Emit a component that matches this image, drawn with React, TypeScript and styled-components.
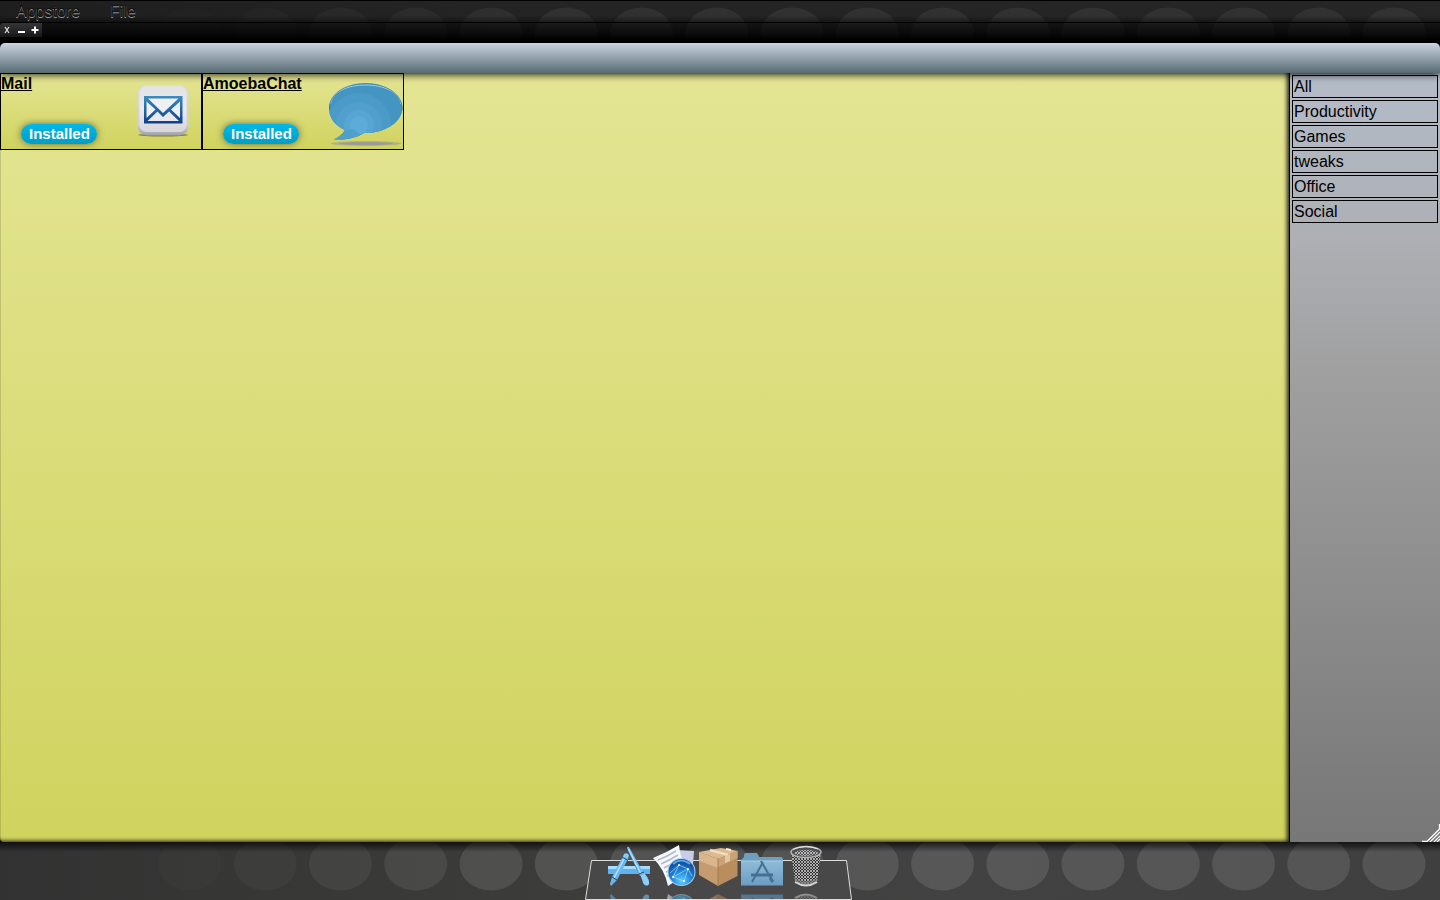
import React from 'react';
import styled, { createGlobalStyle } from 'styled-components';

const GlobalStyle = createGlobalStyle`
  * { box-sizing: border-box; }
  body {
    margin: 0;
    background: #3c3c3c;
    color: #000;
    font-family: "Liberation Sans", Arial, sans-serif;
    font-size: 16px;
    line-height: 18px;
  }
  button { font: inherit; color: inherit; padding: 0; border: 0; background: none; }
  ul { list-style: none; margin: 0; padding: 0; }
`;

const Desktop = styled.div`
  display: flex;
  flex-direction: column;
  min-height: 100vh;
  overflow: hidden;
`;

const Wallpaper = styled.svg`
  position: absolute;
  inset: 0;
  width: 100%;
  height: 100%;
`;

const TopArea = styled.header`
  position: relative;
  height: 43px;
  background: linear-gradient(90deg, #333 0%, #3c3c3c 30%, #404040 100%);
`;

const TopShade = styled.div`
  position: relative;
  height: 43px;
  background: linear-gradient(
    rgba(0, 0, 0, 0.4) 0,
    rgba(0, 0, 0, 0.42) 16px,
    rgba(0, 0, 0, 0.62) 21px,
    rgba(0, 0, 0, 0.7) 24px,
    rgba(0, 0, 0, 0.84) 34px,
    #000 41px
  );
`;

const MenuBar = styled.nav`
  display: flex;
  gap: 30px;
  height: 23px;
  padding: 2px 16px 0;
  border-top: 1px solid #000;
  border-bottom: 1px solid #000;
`;

const MenuButton = styled.button`
  height: 18px;
  color: #111;
  text-shadow: 0 1px 0 #999;
`;

const WindowControls = styled.div`
  display: flex;
  width: 42px;
  height: 14px;
  background: linear-gradient(#353535, #1b1b1b);
  border-radius: 4px 0 0 0;
`;

const ControlButton = styled.button`
  display: flex;
  align-items: center;
  justify-content: center;
  width: 14px;
  height: 14px;
`;

const AppWindow = styled.main`
  position: relative;
  display: flex;
  flex-direction: column;
  flex: 1;
  background: #000;
  box-shadow: 0 0 10px #000;
`;

const TitleBar = styled.div`
  position: relative;
  z-index: 1;
  height: 30px;
  border-radius: 5px 5px 0 0;
  background: linear-gradient(#cbd4e0, #8c9ba6 55%, #586a72);
  box-shadow: 0 1px 8px #000;
`;

const WindowBody = styled.div`
  display: flex;
  flex: 1;
`;

const Store = styled.section`
  position: relative;
  display: flex;
  flex: 1;
  align-items: flex-start;
  background: linear-gradient(#e4e594, #d0d35e);
  border-radius: 0 0 0 4px;
  box-shadow: inset -3px -2px 4px -1px rgba(0, 0, 0, 0.85), inset 1px 0 0 rgba(0, 0, 0, 0.12);
`;

const AppCard = styled.article`
  position: relative;
  display: flex;
  justify-content: space-between;
  width: 202px;
  height: 77px;
  border: 1px solid #000;
  background: linear-gradient(#e4e594, #d0d35e);
`;

const CardText = styled.div`
  display: flex;
  flex-direction: column;
  align-items: flex-start;
  justify-content: space-between;
  padding: 1px 0 5px;
`;

const AppName = styled.h2`
  margin: 0;
  font-size: 16px;
  line-height: 18px;
  text-decoration: underline;
`;

const InstalledButton = styled.button`
  height: 20px;
  margin-left: 20px;
  padding: 0 7px 0 8px;
  border-radius: 10px;
  background: linear-gradient(#00b7ea, #009ec3);
  box-shadow: 0 0 7px rgba(60, 60, 40, 0.7);
  color: #fff;
  font-size: 15px;
  font-weight: bold;
  line-height: 20px;
`;

const CardArt = styled.svg`
  position: absolute;
  top: 0;
  right: 0;
  width: 75px;
  height: 75px;
`;

const Sidebar = styled.aside`
  position: relative;
  width: 151px;
  border-left: 1px solid #000;
  padding: 2px;
  background: linear-gradient(#b4bcc8 0, #adafb4 22%, #9f9f9f 40%, #777 100%);
`;

const CategoryList = styled.ul`
  display: flex;
  flex-direction: column;
  gap: 2px;
`;

const CategoryButton = styled.button`
  display: block;
  width: 100%;
  height: 23px;
  padding: 0 1px;
  border: 1px solid #000;
  text-align: left;
  line-height: 21px;
`;

const ResizeGrip = styled.svg`
  position: absolute;
  right: 0;
  bottom: 0;
  width: 18px;
  height: 18px;
`;

const BottomArea = styled.footer`
  position: relative;
  display: flex;
  justify-content: center;
  height: 58px;
  padding-right: 2px;
  background: linear-gradient(90deg, #323232 0%, #3a3a38 30%, #424242 65%, #3f3f3f 100%);
`;

const BottomShade = styled.div`
  position: absolute;
  inset: 0;
  background: linear-gradient(rgba(0, 0, 0, 0.7), transparent 10px);
`;

const Dock = styled.nav`
  position: relative;
  width: 268px;
  height: 58px;
`;

const Shelf = styled.svg`
  position: absolute;
  left: 0;
  bottom: 0;
  width: 268px;
  height: 40px;
`;

const DockList = styled.ul`
  position: relative;
  display: flex;
  justify-content: center;
  padding: 2px 2px 0 0;
`;

const DockButton = styled.button`
  display: flex;
  flex-direction: column;
  gap: 4px;
  width: 44px;
  height: 56px;
`;

const DockIcon = styled.svg`
  display: block;
  flex: none;
  width: 44px;
  height: 44px;
`;

const Reflection = styled.span`
  display: block;
  width: 44px;
  height: 7px;
  overflow: hidden;
  opacity: 0.5;
  svg { transform: scaleY(-1); }
`;

const DOTS = Array.from({ length: 17 }, (_, i) => 190 + i * 75.25);
const dotOpacity = (i: number) => [0.015, 0.03, 0.06, 0.08, 0.1][i] ?? 0.115;

function Dots({ y, height }: { y: number; height: number }) {
  return (
    <Wallpaper viewBox={`0 0 1440 ${height}`} preserveAspectRatio="xMidYMin slice" aria-hidden="true">
      <g fill="#fff">
        {DOTS.map((x, i) => (
          <ellipse key={x} cx={x} cy={y} rx="31.5" ry="26.5" fillOpacity={dotOpacity(i)} />
        ))}
      </g>
    </Wallpaper>
  );
}

function MailArt() {
  return (
    <CardArt viewBox="0 0 75 75" aria-hidden="true">
      <defs>
        <linearGradient id="tile" x2="0" y2="1">
          <stop stopColor="#dcdce0" /><stop offset=".8" stopColor="#cfcfd3" /><stop offset="1" stopColor="#a0a0a4" />
        </linearGradient>
        <linearGradient id="tileFace" x2="0" y2="1">
          <stop stopColor="#e2e2e2" /><stop offset=".5" stopColor="#ececf0" /><stop offset="1" stopColor="#d6d6da" />
        </linearGradient>
        <linearGradient id="ink" x2="0" y2="1">
          <stop stopColor="#3a8dc2" /><stop offset="1" stopColor="#0f3e8a" />
        </linearGradient>
      </defs>
      <ellipse cx="37" cy="61" rx="25" ry="1.5" fill="#55552a" opacity=".7" />
      <rect x="11.5" y="11" width="51" height="50.5" rx="9" fill="url(#tile)" />
      <rect x="13.5" y="12" width="47" height="46" rx="7" fill="url(#tileFace)" />
      <rect x="18" y="22" width="38.5" height="27.5" fill="url(#ink)" />
      <path d="M22 24.5H52.5L37 39Z" fill="#f0f0f2" />
      <path d="M20.500 27.500V44L29.500 35.500ZM54 27.500V44L45 35.500Z" fill="#f0f0f2" />
      <path d="M21.500 47L31.500 37.500L37 43L43 37.500L53 47Z" fill="#e9e9ed" />
    </CardArt>
  );
}

function ChatArt() {
  return (
    <CardArt viewBox="0 0 75 75" aria-hidden="true">
      <defs>
        <clipPath id="bubble">
          <path d="M37.500 9.500C58 9.500 74.500 20.500 74.500 34S58 59.500 36 59C28 64 18 66 6 65.500C11 63 15 60 17 56C7 51.500 1 44 1 34.500C1 20.500 17 9.500 37.500 9.500Z" />
        </clipPath>
      </defs>
      <ellipse cx="38" cy="69.5" rx="35" ry="2.5" fill="#92929c" opacity=".5" />
      <ellipse cx="38" cy="69.5" rx="27" ry="1.5" fill="#9292a4" opacity=".7" />
      <g clipPath="url(#bubble)">
        <rect width="75" height="75" fill="#4595c2" />
        <circle cx="31" cy="51" r="32" fill="#4b9bc8" />
        <circle cx="31" cy="51" r="23" fill="#509fcd" />
        <circle cx="31" cy="51" r="15" fill="#57a5d3" />
        <circle cx="31" cy="51" r="9" fill="#5cabd9" />
        <path d="M0 60L25 55L34 62L5 68Z" fill="#509fcd" />
      </g>
      <path d="M2.500 30C4 18 19 11 37.500 11S71 18 73 30" fill="none" stroke="#9bd4f5" strokeWidth="1" />
      <path d="M1.500 36C0 21 16 9.500 37.500 9.500S75 21 74 36" fill="none" stroke="#3178aa" strokeWidth=".7" />
    </CardArt>
  );
}

function AppStoreShape() {
  return (
    <>
      <path d="M0 22H42V30H0Z" fill="#5fb3ef" />
      <path d="M0 22H42V25H0Z" fill="#a6dcff" />
      <path d="M10 31L14 22M33 31L28 22" stroke="#3c4853" strokeWidth="2" />
      <path d="M19 4Q19 2 21 3L36 30L32 32Z" fill="#6bbcf4" />
      <path d="M20.500 5L33 30" stroke="#b8e3ff" strokeWidth="1.200" />
      <path d="M15 12L20 15L9 36L3 42L2 40L4 33Z" fill="#68b6ee" />
      <path d="M16.500 14L6 34" stroke="#b5e2ff" strokeWidth="1.500" />
      <path d="M16 10Q19 8 21 11L20 15L15 12.500Z" fill="#85ccff" />
      <path d="M14 13L20 16.500M4 33L9 36M31 30L36 28" stroke="#244965" strokeWidth="1" />
      <path d="M32.500 31.500L36.500 29.500Q43 37 40.500 41Q36 43 34.500 37Z" fill="#8bceff" />
    </>
  );
}

function DocumentsShape() {
  return (
    <>
      <path d="M25 6L42 7L40 34L23 31Z" fill="#c9cde8" />
      <path d="M1 14Q14 9 27 1L28 8L34 30L16 42Q13 26 1 14Z" fill="#f5f7fd" />
      <path d="M6 16Q16 12 24 7M9 20Q18 16 26 11M12 24L27 16M14 28L21 25M15 32L18 31" fill="none" stroke="#b3bac8" strokeWidth="1.500" />
      <circle cx="29.5" cy="28" r="14" fill="#a8cdee" />
      <circle cx="29.500" cy="28" r="13" fill="url(#globe)" />
      <path d="M18 29L27 21L36 25L32 37L21 33L27 21M21 33L36 25L40 32" fill="none" stroke="#a9e0ff" strokeWidth=".7" />
      <path d="M21 20Q29 13 38 20" fill="none" stroke="#5da5e9" strokeWidth="2" />
      <g fill="#fff"><circle cx="27" cy="21" r="1" /><circle cx="36" cy="25" r="1" /><circle cx="32" cy="37" r="1" /><circle cx="21" cy="33" r="1" /></g>
    </>
  );
}

function BoxShape() {
  return (
    <>
      <path d="M3 8L25 4L42 7L22 15Z" fill="#dcb98f" />
      <path d="M3 8L22 15V42L3 31Z" fill="#c59b6f" />
      <path d="M22 15L41.500 7V32L22 42Z" fill="#b98e5f" />
      <path d="M3 8L22 15V24L3 17Z" fill="#d9b68b" />
      <path d="M14 6L32 11" stroke="#efdcbf" strokeWidth="2.500" />
      <path d="M30 5L35 6" stroke="#fff3dc" strokeWidth="2" />
      <path d="M22 15L41.500 7V14L22 23Z" fill="#caa274" />
      <path d="M22 15V42" stroke="#a67c50" />
      <path d="M29 12.200L34 10V17L29 19Z" fill="#e2c8a2" />
    </>
  );
}

function FolderShape() {
  return (
    <>
      <path d="M1 16L4 13V11Q4 9 6 9H16Q18 9 19 13H41Q43 13 43 16V41H1Z" fill="#6f9fbe" />
      <rect x="1" y="17" width="42" height="25" fill="url(#folderFace)" />
      <path d="M1 17H43" stroke="#a9cee3" />
      <path d="M11 29.500H33V32.500H11Z" fill="#466f91" />
      <path d="M21 17L32 36M23 18L12 38" fill="none" stroke="#466f91" strokeWidth="2" />
      <path d="M30 34L33 38" stroke="#466f91" strokeWidth="3" />
      <path d="M1 41.500H43" stroke="#45799f" />
    </>
  );
}

function TrashShape() {
  return (
    <>
      <path d="M7 8L11 38Q22 46 33 38L37 8Z" fill="#303030" />
      <path d="M7 8L11 38Q22 46 33 38L37 8Z" fill="url(#mesh)" />
      <path d="M10 33Q22 41 34 33L33 39Q22 45 11 39Z" fill="#777" opacity=".6" />
      <ellipse cx="22" cy="8" rx="15" ry="5.5" fill="#505050" stroke="#b5b5b5" strokeWidth="1.500" />
      <ellipse cx="22" cy="9" rx="12" ry="3" fill="url(#mesh)" />
      <path d="M9 5.500Q21 0 34 5" fill="none" stroke="#eee" strokeWidth="1" />
      <path d="M11 38Q22 45 33 38" fill="none" stroke="#d5d5d5" strokeWidth="2" />
    </>
  );
}

const CATEGORIES = ['All', 'Productivity', 'Games', 'tweaks', 'Office', 'Social'];
const APPS = [
  { name: 'Mail', Art: MailArt },
  { name: 'AmoebaChat', Art: ChatArt },
];
const DOCK_ITEMS = [
  { label: 'Appstore', Shape: AppStoreShape },
  { label: 'Browser', Shape: DocumentsShape },
  { label: 'Packages', Shape: BoxShape },
  { label: 'Applications', Shape: FolderShape },
  { label: 'Trash', Shape: TrashShape },
];

export default function App() {
  return (
    <Desktop>
      <GlobalStyle />
      <TopArea>
        <Dots y={34} height={43} />
        <TopShade>
          <MenuBar aria-label="Menu">
            <MenuButton>Appstore</MenuButton>
            <MenuButton>File</MenuButton>
          </MenuBar>
          <WindowControls>
            <ControlButton aria-label="Close">
              <svg width="14" height="14"><path d="M5 4L9 10M9 4L5 10" stroke="#ddd" strokeWidth="1.300" /></svg>
            </ControlButton>
            <ControlButton aria-label="Minimize">
              <svg width="14" height="14"><path d="M4 9H11" stroke="#fff" strokeWidth="2" /></svg>
            </ControlButton>
            <ControlButton aria-label="Maximize">
              <svg width="14" height="14"><path d="M3.500 7H10.500M7 3.500V10.500" stroke="#fff" strokeWidth="2" /></svg>
            </ControlButton>
          </WindowControls>
        </TopShade>
      </TopArea>
      <AppWindow>
        <TitleBar />
        <WindowBody>
          <Store>
            {APPS.map(({ name, Art }) => (
              <AppCard key={name}>
                <CardText>
                  <AppName>{name}</AppName>
                  <InstalledButton>Installed</InstalledButton>
                </CardText>
                <Art />
              </AppCard>
            ))}
          </Store>
          <Sidebar>
            <CategoryList>
              {CATEGORIES.map((category) => (
                <li key={category}><CategoryButton>{category}</CategoryButton></li>
              ))}
            </CategoryList>
            <ResizeGrip viewBox="0 0 18 18" aria-hidden="true">
              <path d="M0 17.500H5L17.500 5V0" fill="none" stroke="#fff" strokeWidth="1.300" />
              <path d="M8 18L18 8M12 18L18 12M15 18L18 15" stroke="#fff" strokeWidth="1.200" />
            </ResizeGrip>
          </Sidebar>
        </WindowBody>
      </AppWindow>
      <BottomArea>
        <Dots y={22} height={58} />
        <BottomShade />
        <Dock aria-label="Dock">
          <Shelf viewBox="0 0 268 40" aria-hidden="true">
            <defs>
              <linearGradient id="folderFace" x2="0" y2="1">
                <stop stopColor="#8fbbd8" /><stop offset="1" stopColor="#6a9dc3" />
              </linearGradient>
              <radialGradient id="globe" cx=".5" cy=".85" r=".85">
                <stop stopColor="#5fd0ff" /><stop offset=".45" stopColor="#2086d8" /><stop offset="1" stopColor="#0b3c8c" />
              </radialGradient>
              <pattern id="mesh" width="3" height="3" patternUnits="userSpaceOnUse">
                <path d="M0 0L3 3M3 0L0 3" stroke="#ccc" strokeWidth=".8" />
              </pattern>
            </defs>
            <path d="M6.500 0.500H261.500L266.500 39.500H.5Z" fill="#484848" stroke="#ddd" />
          </Shelf>
          <DockList>
            {DOCK_ITEMS.map(({ label, Shape }) => (
              <li key={label}>
                <DockButton aria-label={label}>
                  <DockIcon viewBox="0 0 44 44"><Shape /></DockIcon>
                  <Reflection>
                    <DockIcon viewBox="0 0 44 44"><Shape /></DockIcon>
                  </Reflection>
                </DockButton>
              </li>
            ))}
          </DockList>
        </Dock>
      </BottomArea>
    </Desktop>
  );
}
